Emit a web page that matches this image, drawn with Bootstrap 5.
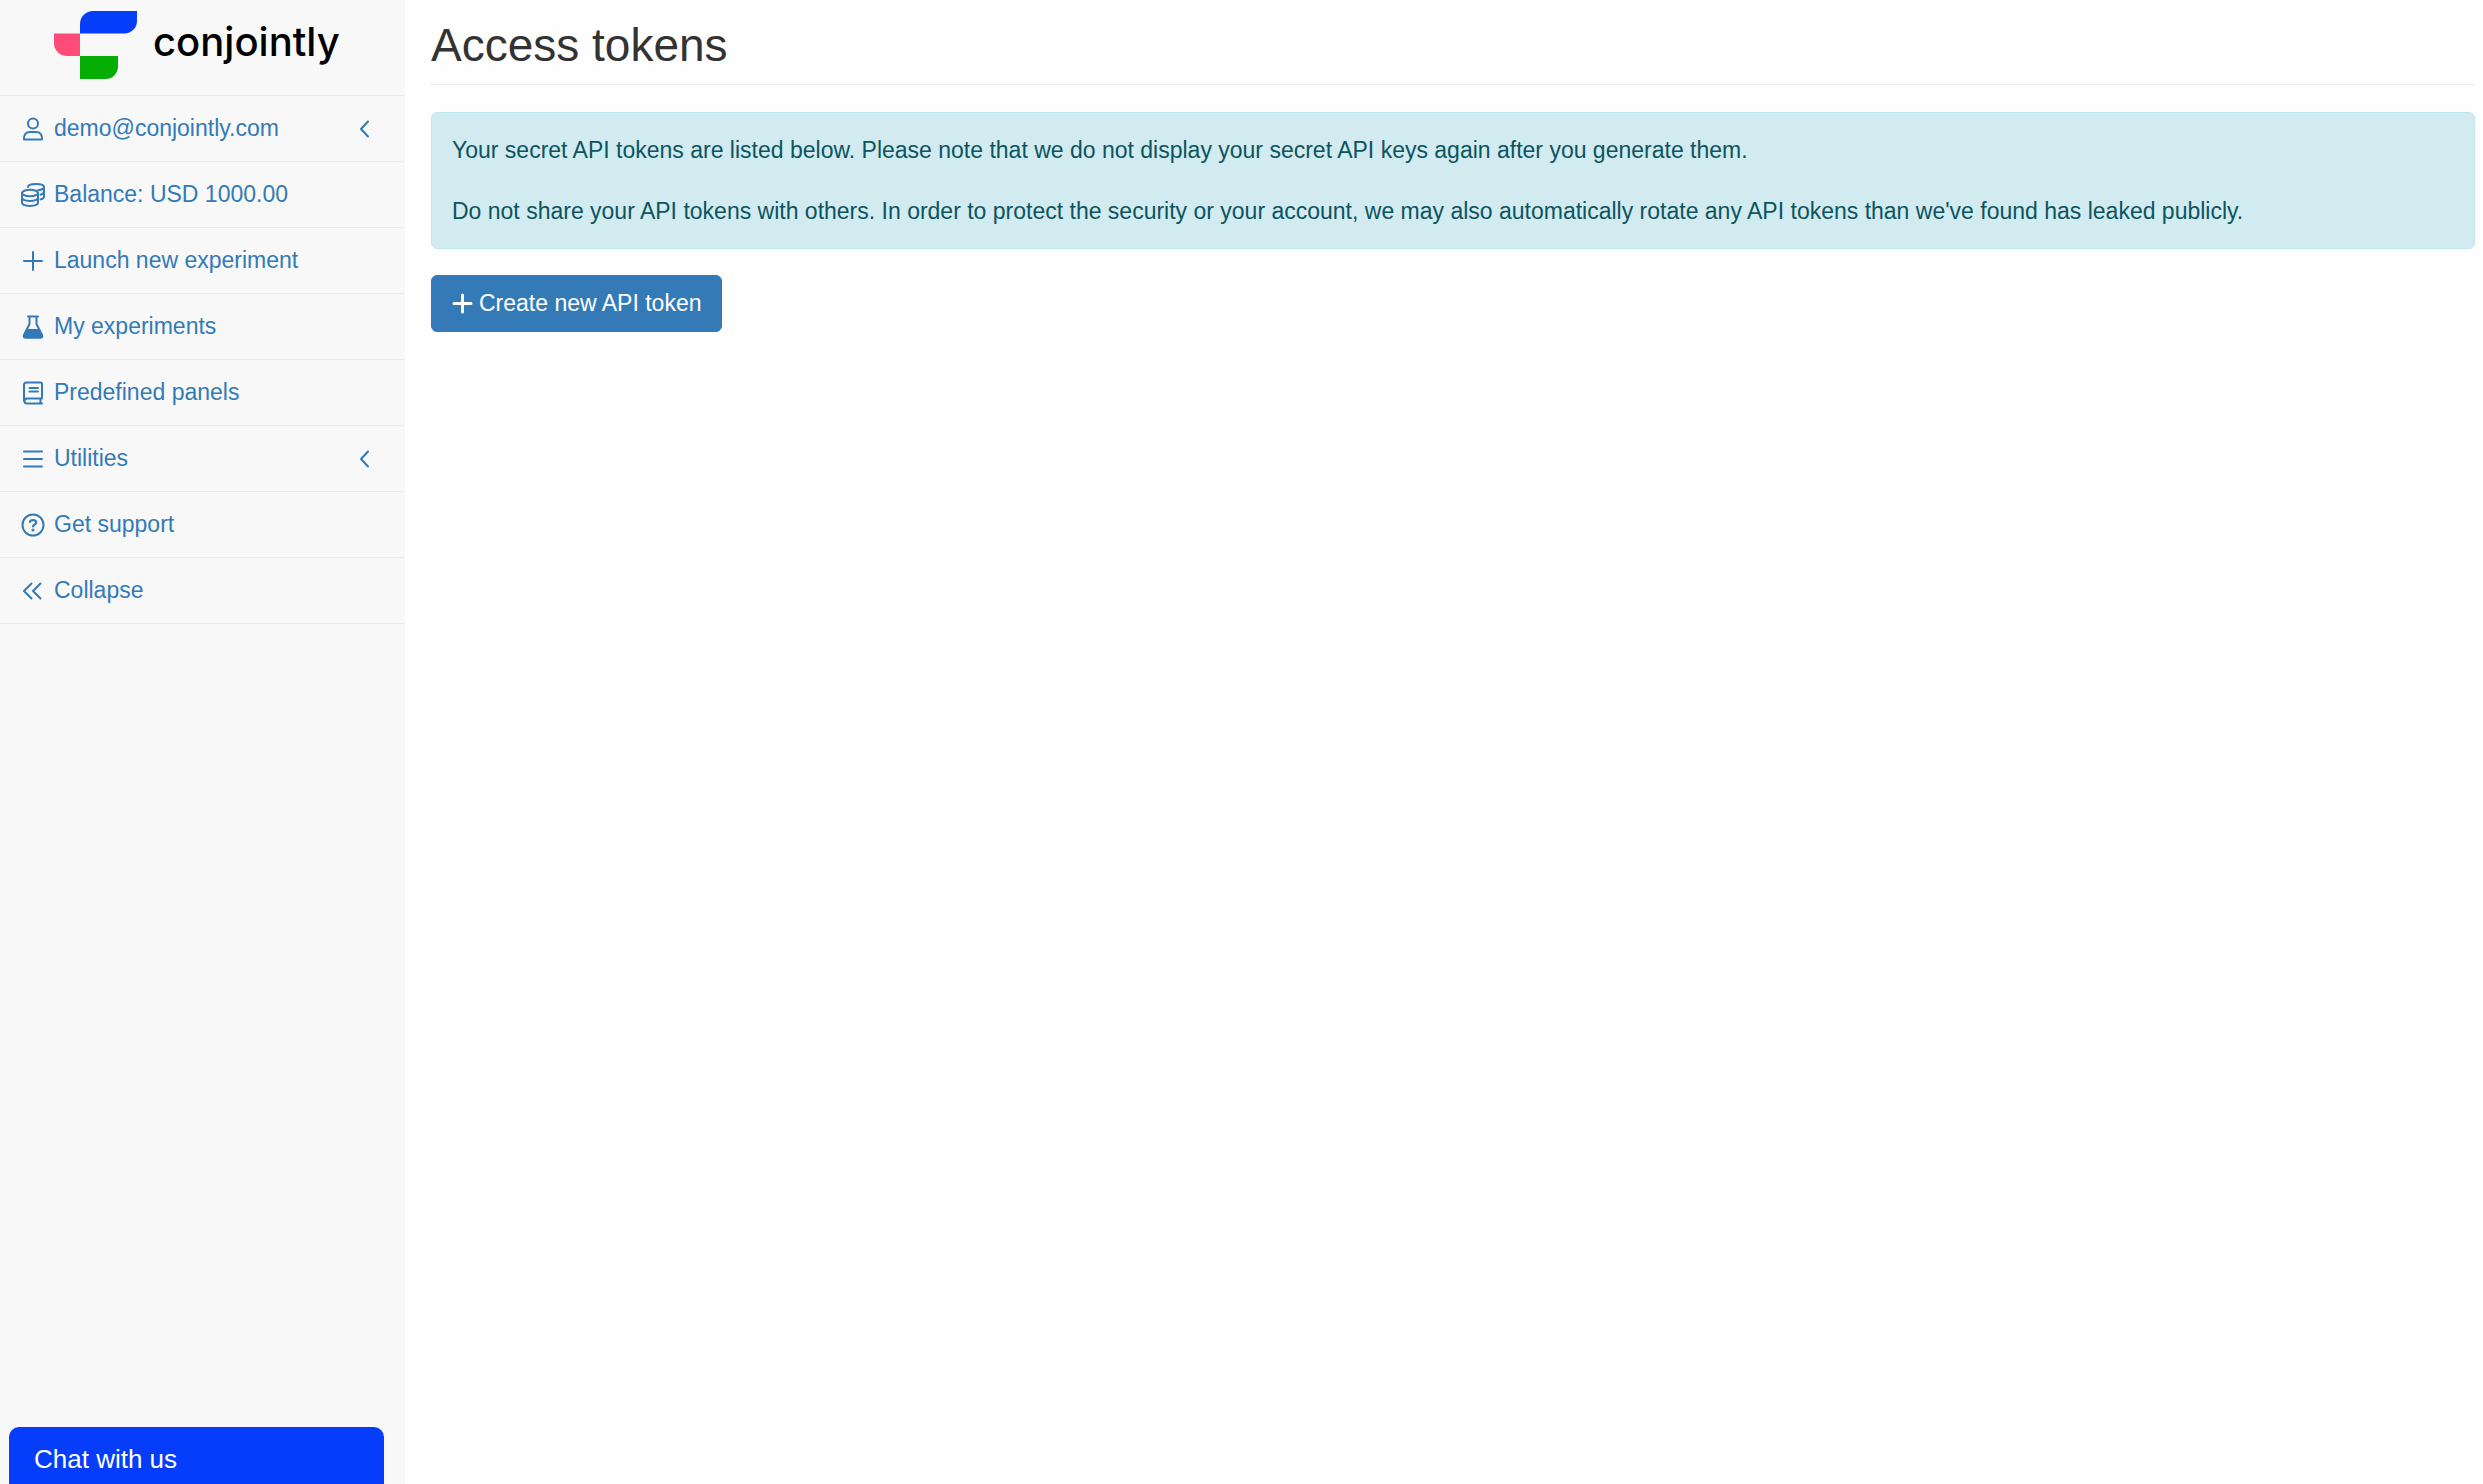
<!DOCTYPE html>
<html lang="en">
<head>
<meta charset="utf-8">
<meta name="viewport" content="width=device-width, initial-scale=1">
<title>Access tokens - Conjointly</title>
<link href="https://cdn.jsdelivr.net/npm/bootstrap@5.3.0/dist/css/bootstrap.min.css" rel="stylesheet">
<style>
body { font-family: "Liberation Sans", Arial, sans-serif; font-size: 23px; line-height: 31px; color: #333; background: #fefefe; }
.side-panel { width: 405px; background: #f8f8f8; }
.brand-link { height: 96px; padding: 11px 0 0 54px; gap: 16px; border-bottom: 1px solid #ebebeb; color: #000; }
.brand-text { font-family: Inter, sans-serif; font-weight: 500; font-size: 40px; line-height: 62px; }
.side-link { gap: 9px; padding: 17px 35px 17px 21px; border-bottom: 1px solid #ebebeb; color: #337ab7; }
.side-link:hover { background: #eee; color: #23527c; }
.side-link svg, .btn svg { fill: none; stroke: currentColor; stroke-width: 2; stroke-linecap: round; stroke-linejoin: round; flex: none; }
.content-area { padding: 20px 8px 0 26px; }
.page-title { font-size: 46px; line-height: 50px; padding-bottom: 14px; margin-bottom: 27px; border-bottom: 1px solid #ebebeb; font-weight: 400; }
.alert-tokens { padding: 22px 20px 21px; margin-bottom: 26px; color: #0c5460; background: #d1ebf0; border: 1px solid #bee9f0; border-radius: 6px; }
.alert-tokens p + p { margin-top: 30px; }
.btn-token { --bs-btn-color: #fff; --bs-btn-bg: #337ab7; --bs-btn-border-color: #337ab7; --bs-btn-hover-color: #fff; --bs-btn-hover-bg: #286090; font-size: 23px; line-height: 31px; padding: 12px 20px; border-radius: 6px; gap: 6px; }
.chat-tab { left: 9px; width: 375px; height: 57px; padding: 6px 25px 0; border-radius: 10px 10px 0 0; background: #053dfb; color: #fff; font-size: 26px; line-height: 30px; }
</style>
</head>
<body>
<div class="d-flex min-vh-100">
  <nav class="side-panel flex-shrink-0" aria-label="Main">
    <a href="#" class="brand-link d-flex align-items-start text-decoration-none">
      <svg width="83" height="68" viewBox="0 0 83 68" aria-hidden="true">
        <path fill="#053dfb" d="M26 22.500V13A13 13 0 0 1 39 0H83V10A12.500 12.500 0 0 1 70.500 22.500Z"/>
        <path fill="#ff4b77" d="M0 22.500H26V45H13A13 13 0 0 1 0 32Z"/>
        <path fill="#05ad05" d="M26 45H64V55A12.500 12.500 0 0 1 51.500 68H26Z"/>
      </svg>
      <span class="brand-text">conjointly</span>
    </a>
    <ul class="nav flex-column flex-nowrap">
      <li><a href="#" class="side-link d-flex align-items-center text-decoration-none">
        <svg width="24" height="24" viewBox="0 0 24 24"><circle cx="12" cy="6.500" r="5"/><path d="M3 22.500Q2.700 15 9 15H15Q21.300 15 21 22.500Z"/></svg>
        <span class="flex-grow-1">demo@conjointly.com</span>
        <svg width="11" height="18" viewBox="0 0 11 18"><path d="M9 1.500L2 9L9 16.500"/></svg></a></li>
      <li><a href="#" class="side-link d-flex align-items-center text-decoration-none">
        <svg width="24" height="24" viewBox="0 0 24 24"><ellipse cx="9" cy="10" rx="8" ry="3.200"/><path d="M1 10V19.500C1 24 17 24 17 19.500V10M1 14.500C1 19 17 19 17 14.500M7 4C7 0 23 0 23 4C23 5.600 20.500 6.800 17 7.200M23 4V13.500C23 15 21.500 16 19.500 16.400M23 8.500C23 10.200 21.500 11.200 19.500 11.700"/></svg>
        <span>Balance: USD 1000.00</span></a></li>
      <li><a href="#" class="side-link d-flex align-items-center text-decoration-none">
        <svg width="24" height="24" viewBox="0 0 24 24"><path d="M12 3V21M3 12H21"/></svg>
        <span>Launch new experiment</span></a></li>
      <li><a href="#" class="side-link d-flex align-items-center text-decoration-none">
        <svg width="24" height="24" viewBox="0 0 24 24"><path d="M7 1.500H17M8.500 2V9L3 20Q2 22.500 4.500 22.500H19.500Q22 22.500 21 20L15.500 9V2"/><path fill="currentColor" d="M6 15H18L21 20.500Q21.500 22.500 19.500 22.500H4.500Q2.500 22.500 3 20.500Z"/></svg>
        <span>My experiments</span></a></li>
      <li><a href="#" class="side-link d-flex align-items-center text-decoration-none">
        <svg width="24" height="24" viewBox="0 0 24 24"><path d="M21 17.500H6A2.500 2.500 0 0 0 6 22.500H21M19.500 18V22M3 20V4Q3 1.500 5.500 1.500H19.500Q21 1.500 21 3V16Q21 17.500 19.500 17.500M8.500 7H17M8.500 10.500H17"/></svg>
        <span>Predefined panels</span></a></li>
      <li><a href="#" class="side-link d-flex align-items-center text-decoration-none">
        <svg width="24" height="24" viewBox="0 0 24 24"><path d="M3 4.500H21M3 12H21M3 19.500H21"/></svg>
        <span class="flex-grow-1">Utilities</span>
        <svg width="11" height="18" viewBox="0 0 11 18"><path d="M9 1.500L2 9L9 16.500"/></svg></a></li>
      <li><a href="#" class="side-link d-flex align-items-center text-decoration-none">
        <svg width="24" height="24" viewBox="0 0 24 24"><circle cx="12" cy="12" r="10.500"/><path stroke-width="2.200" d="M9 9C9 6.500 15.200 6.200 15.200 9.500C15.200 11.500 12 11.500 12 13.500"/><circle cx="12" cy="17" r=".6" fill="currentColor"/></svg>
        <span>Get support</span></a></li>
      <li><a href="#" class="side-link d-flex align-items-center text-decoration-none">
        <svg width="24" height="24" viewBox="0 0 24 24"><path d="M10.500 4.500L3 12L10.500 19.500M19.500 4.500L12 12L19.500 19.500"/></svg>
        <span>Collapse</span></a></li>
    </ul>
  </nav>
  <main class="content-area flex-grow-1">
    <h1 class="page-title">Access tokens</h1>
    <div class="alert alert-tokens" role="alert">
      <p class="mb-0">Your secret API tokens are listed below. Please note that we do not display your secret API keys again after you generate them.</p>
      <p class="mb-0">Do not share your API tokens with others. In order to protect the security or your account, we may also automatically rotate any API tokens than we've found has leaked publicly.</p>
    </div>
    <button type="button" class="btn btn-token d-inline-flex align-items-center">
      <svg width="21" height="21" viewBox="0 0 21 21"><path stroke-width="3" d="M10.500 2V19M2 10.500H19"/></svg>
      Create new API token
    </button>
  </main>
</div>
<button type="button" class="chat-tab position-fixed bottom-0 border-0 text-start">Chat with us</button>
<script src="https://cdn.jsdelivr.net/npm/bootstrap@5.3.0/dist/js/bootstrap.bundle.min.js"></script>
</body>
</html>
